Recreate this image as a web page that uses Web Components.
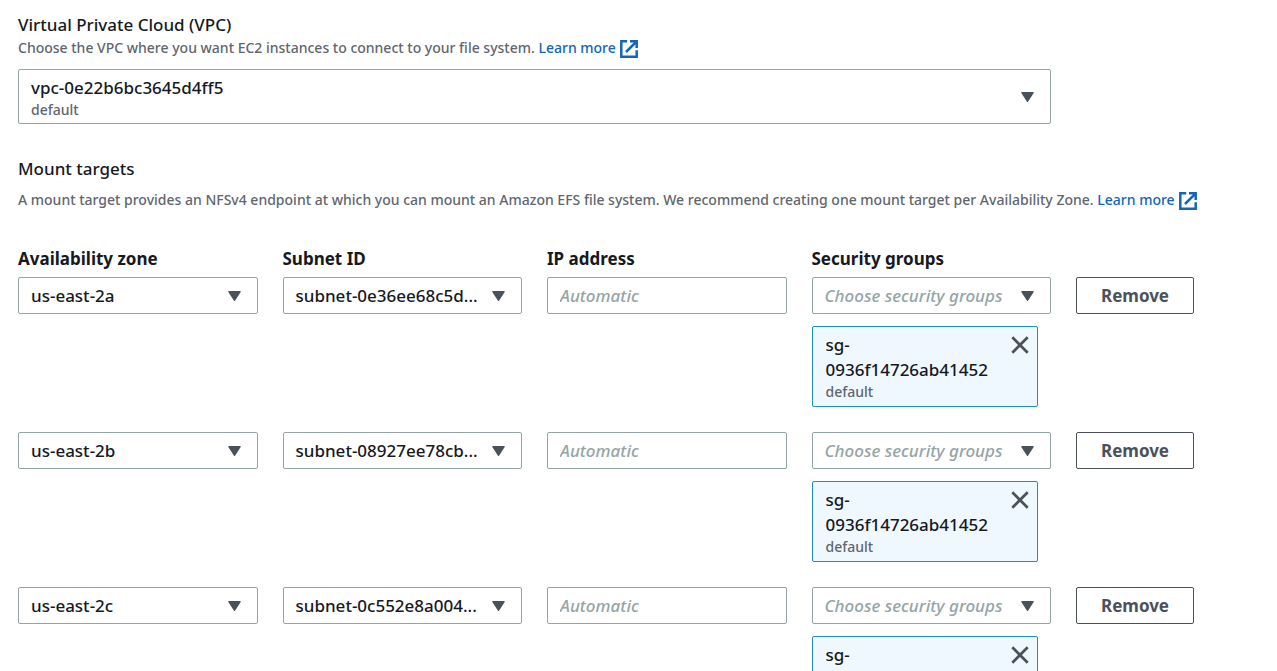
<!DOCTYPE html>
<html lang="en">
<head>
<meta charset="utf-8">
<meta name="viewport" content="width=device-width, initial-scale=1">
<title>Network access</title>
<style>
  html { scrollbar-width: none; }
  body {
    margin: 0;
    background: #fff;
    color: #16191f;
    font-family: "Noto Sans", "Open Sans", sans-serif;
    font-size: 17px;
    font-weight: 500;
    line-height: 25px;
    --columns: repeat(4, minmax(0, 1fr)) 183px;
    --column-gap: 25px;
    --text-secondary: #5f666f;
    --border: #95a5a6;
    --control: #4b515b;
    --link: #1166bb;
    --small: 14px;
  }
</style>
</head>
<body>
<network-settings></network-settings>

<script>
const define = (name, html, setup) => {
  const template = document.createElement('template');
  template.innerHTML = html;
  customElements.define(name, class extends HTMLElement {
    connectedCallback() {
      if (this.shadowRoot) return;
      this.attachShadow({ mode: 'open' }).append(template.content.cloneNode(true));
      if (setup) setup(this, this.shadowRoot);
    }
  });
};

/* Shows the label above the control, or names the control when there is none. */
const applyLabel = (host, root, control) => {
  const label = root.querySelector('label');
  if (host.hasAttribute('label')) {
    label.textContent = host.getAttribute('label');
  } else {
    label.remove();
    control.setAttribute('aria-label', host.getAttribute('name'));
  }
};

const fieldStyles = `
  :host { display: block; min-width: 0; }
  label { display: block; font-weight: 700; line-height: 25px; padding-bottom: 6px; }
  select, input {
    box-sizing: border-box;
    width: 100%;
    height: 37px;
    margin: 0;
    padding: 0 12px;
    border: 1px solid var(--border);
    border-radius: 2px;
    background: #fff;
    color: inherit;
    font: inherit;
    appearance: none;
  }`;

define('ui-select', `
  <style>
    ${fieldStyles}
    .box { display: grid; grid-template-columns: minmax(0, 1fr) auto; align-items: center; }
    select { grid-area: 1 / 1 / 2 / 3; padding-right: 32px; text-overflow: ellipsis; }
    svg { grid-area: 1 / 2; width: 13px; height: 10px; margin-right: 17px; fill: var(--control); pointer-events: none; }
    .description {
      grid-area: 1 / 1; align-self: end; padding: 0 13px 4px;
      color: var(--text-secondary); font-size: var(--small); line-height: 20px; pointer-events: none;
    }
    :host([description]) select { height: 55px; padding-top: 4px; padding-bottom: 22px; }
    :host([placeholder]) select { color: var(--border); font-style: italic; }
  </style>
  <label for="control"></label>
  <div class="box">
    <select id="control"><option></option></select>
    <svg viewBox="0 0 13 10" aria-hidden="true"><path d="M1 0h11q1 0 .7 1L7.2 9.4q-.7 1-1.4 0L.3 1Q0 0 1 0z"/></svg>
  </div>`, (host, root) => {
  const select = root.querySelector('select');
  root.querySelector('option').textContent = host.getAttribute('value') || host.getAttribute('placeholder');
  applyLabel(host, root, select);
  if (host.hasAttribute('description')) {
    const note = document.createElement('span');
    note.className = 'description';
    note.textContent = host.getAttribute('description');
    select.after(note);
  }
});

define('ui-input', `
  <style>
    ${fieldStyles}
    input::placeholder { color: var(--border); font-style: italic; opacity: 1; }
  </style>
  <label for="control"></label>
  <input id="control" type="text">`, (host, root) => {
  const input = root.querySelector('input');
  input.placeholder = host.getAttribute('placeholder');
  applyLabel(host, root, input);
});

define('ui-button', `
  <style>
    :host { display: block; }
    button {
      height: 37px; padding: 0 24px; border: 1px solid var(--control); border-radius: 2px;
      background: #fff; color: var(--control); font: inherit; font-weight: 700; cursor: pointer;
    }
  </style>
  <button type="button"><slot></slot></button>`);

define('ui-link', `
  <style>
    :host { display: inline; }
    a { color: var(--link); text-decoration: none; white-space: nowrap; }
    svg { width: 18px; height: 18px; margin-left: 1px; vertical-align: -5px; fill: none; stroke: currentColor; stroke-width: 2.5; }
  </style>
  <a href="#"><slot></slot>
    <svg viewBox="0 0 18 18" aria-hidden="true"><path d="M7.2 1.3H1.3v15.4h15.4v-6.5M10 1.3h6.7V8M16.7 1.3L6 12"/></svg></a>`);

define('ui-token', `
  <style>
    :host {
      display: grid; grid-template-columns: minmax(0, 1fr) auto; align-items: start;
      box-sizing: border-box; margin: 12px 13px 0 0; padding: 5px 8px 5px 13px;
      border: 1px solid #1e8fc0; border-radius: 2px; background: #f0f8ff;
    }
    .name { line-height: 25px; }
    .note { color: var(--text-secondary); font-size: var(--small); line-height: 19px; }
    button { display: block; margin: 4px 0 0; padding: 0; border: 0; background: none; cursor: pointer; }
    svg { display: block; width: 18px; height: 18px; stroke: var(--control); stroke-width: 2.7; }
  </style>
  <div><div class="name"><slot></slot></div><div class="note"><slot name="note"></slot></div></div>
  <button type="button" aria-label="Remove security group"><svg viewBox="0 0 18 18" aria-hidden="true"><path d="M1.3 1.3l15.4 15.4M16.7 1.3L1.3 16.7"/></svg></button>`);

define('mount-target', `
  <style>
    :host {
      display: grid; grid-template-columns: var(--columns); column-gap: var(--column-gap);
      align-items: start;
    }
    :host([first]) ui-button { padding-top: 31px; }
  </style>
  <ui-select class="field" name="Availability zone"></ui-select>
  <ui-select class="field" name="Subnet ID"></ui-select>
  <ui-input class="field" name="IP address" placeholder="Automatic"></ui-input>
  <div>
    <ui-select class="field" name="Security groups" placeholder="Choose security groups"></ui-select>
    <ui-token>sg-<wbr>0936f14726ab41452<span slot="note">default</span></ui-token>
  </div>
  <ui-button>Remove</ui-button>`, (host, root) => {
  const fields = root.querySelectorAll('.field');
  const values = [host.getAttribute('zone'), host.getAttribute('subnet')];
  fields.forEach((field, i) => {
    const copy = document.createElement(field.localName);
    for (const { name, value } of field.attributes) copy.setAttribute(name, value);
    if (values[i]) copy.setAttribute('value', values[i]);
    if (host.hasAttribute('first')) copy.setAttribute('label', field.getAttribute('name'));
    field.replaceWith(copy);
  });
});

define('network-settings', `
  <style>
    :host { display: block; padding: 12px 18px 25px; }
    h2 { margin: 0; font-size: inherit; font-weight: inherit; line-height: 25px; }
    p { margin: 0; color: var(--text-secondary); font-size: var(--small); line-height: 22px; }
    .vpc { display: grid; grid-template-columns: var(--columns); column-gap: var(--column-gap); padding: 10px 0 32px; }
    .vpc ui-select { grid-column: 1 / 5; }
    .intro { padding-top: 8px; }
    .targets { display: grid; gap: 25px; padding-top: 35px; }
  </style>
  <section>
    <h2>Virtual Private Cloud (VPC)</h2>
    <p>Choose the VPC where you want EC2 instances to connect to your file system. <ui-link>Learn more</ui-link></p>
    <div class="vpc">
      <ui-select name="Virtual Private Cloud (VPC)" value="vpc-0e22b6bc3645d4ff5" description="default"></ui-select>
    </div>
  </section>
  <section>
    <h2>Mount targets</h2>
    <p class="intro">A mount target provides an NFSv4 endpoint at which you can mount an Amazon EFS file system. We recommend creating one mount target per Availability Zone. <ui-link>Learn more</ui-link></p>
    <div class="targets">
      <mount-target first zone="us-east-2a" subnet="subnet-0e36ee68c5d..."></mount-target>
      <mount-target zone="us-east-2b" subnet="subnet-08927ee78cb..."></mount-target>
      <mount-target zone="us-east-2c" subnet="subnet-0c552e8a004..."></mount-target>
    </div>
  </section>`);
</script>
</body>
</html>
